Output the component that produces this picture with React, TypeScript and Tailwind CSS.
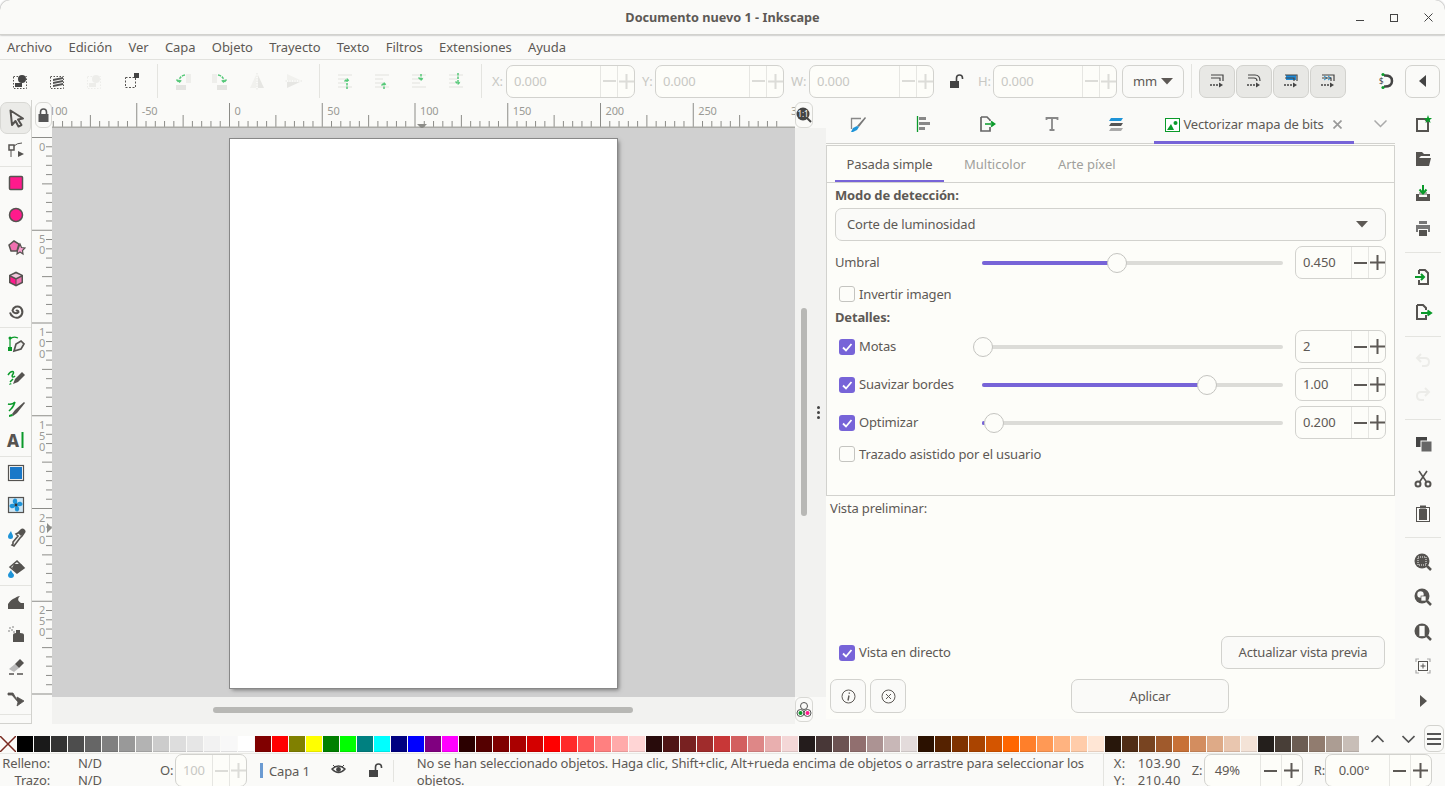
import React from 'react';

const G = '#555350';
const L = '#dcdcd8';
const GR = '#0a9a2a';
const P = '#ff1a8c';

const Svg = ({ size = 20, children }: { size?: number; children: React.ReactNode }) => (
  <svg width={size} height={size} viewBox="0 0 20 20" fill="none">{children}</svg>
);

const dotted = <rect x="2.5" y="5.5" width="13" height="12" stroke={G} strokeDasharray="1.5 1.5" />;

const toolIcons: Record<string, React.ReactNode> = {
  select: <path d="M4.5 2.5 L17 10.5 L12 11.5 L15.5 17 L12.5 18.5 L9.5 13 L6 17 Z" fill="#eeeeec" stroke={G} strokeWidth="2" strokeLinejoin="round" />,
  node: <><rect x="3" y="5" width="5" height="5" fill="#f5f5f3" stroke={G} strokeWidth="1.5" /><path d="M8 6 Q11 3 16 3 M5 10 V17" stroke={G} /><path d="M12 11 L18 14 L12 17 Z" fill={G} /></>,
  rect: <rect x="3.5" y="3.5" width="13" height="13" rx="1" fill={P} stroke={G} strokeWidth="1.5" />,
  circle: <circle cx="10" cy="10" r="6.5" fill={P} stroke={G} strokeWidth="1.5" />,
  star: <><path d="M3 8 L8 4 L13 7 L11 14 L5 14 Z" fill="#f070b0" stroke={G} strokeWidth="1.5" /><path d="M14 7 L15.5 10.5 L19 11 L16.5 13.5 L17 17 L14 15 L11 17 L11.5 13.5 Z" fill="#f8a0d0" stroke={G} strokeWidth="1.2" /></>,
  cube: <><path d="M10 2.5 L17 6 V14 L10 17.5 L3 14 V6 Z" fill={G} /><path d="M10 4.5 L15 6.5 L10 9 L5 6.5 Z" fill="#f0c8dc" /><path d="M4.5 8 L9.5 10.5 V15.5 L4.5 13 Z" fill={P} /><path d="M10.5 10.5 L15.5 8 V13 L10.5 15.5 Z" fill="#f070b0" /></>,
  spiral: <path d="M10 10 a1.5 1.5 0 0 1 2.5 1 a3.5 3.5 0 0 1 -6 -1.5 a5 5 0 0 1 8 -3 a6 6 0 0 1 -2 10 a7 7 0 0 1 -8.5 -5" stroke={G} strokeWidth="2" />,
  bezier: <><path d="M4 5 V15 M4 5 Q7 2 12 4" stroke={GR} strokeWidth="1.2" /><circle cx="4" cy="4" r="1.5" fill={GR} /><rect x="2" y="13" width="4" height="4" fill={GR} /><path d="M8 17 L10 10 L15 7 L18 10 L15 15 Z" fill="#f0f0ee" stroke={G} strokeWidth="1.7" /></>,
  pencil: <><path d="M2 9 C5 4 9 5 7 8 C5 11 7 12 9 10 M4 16 L7 13" stroke={GR} strokeWidth="1.5" /><path d="M7 18 L9 13 L16 6 L19 9 L12 16 Z" fill={G} /><path d="M4 17 l2 1 l-3 1 z" fill={GR} /></>,
  calli: <><path d="M2 6 C5 7 8 5 9 4 M9 4 C8 8 6 10 5 11 M3 13 L7 9" stroke={GR} strokeWidth="1.5" /><path d="M6 16 L9 12 L18 4 L19 5 L11 15 L7 18 Z" fill={G} /><path d="M3 17 L6 16 L7 18 L3 19 Z" fill={GR} /></>,
  text: <><text x="1" y="17" fontSize="17" fontWeight="800" fill={G} fontFamily="Noto Sans">A</text><rect x="15.5" y="2" width="2" height="16" fill={GR} /></>,
  gradient: <><rect x="2.5" y="2.5" width="15" height="15" fill="#fafaf8" stroke={G} strokeWidth="1.2" /><rect x="4" y="4" width="12" height="12" fill="#1a78c8" /></>,
  mesh: (
    <>
      <rect x="2.5" y="2.5" width="15" height="15" fill="#cfe6f3" stroke={G} strokeWidth="1.2" />
      {[0, 90, 180, 270].map(r => (
        <path key={r} d="M10 10 C6.5 9 5.5 5 8.5 3.5 C11.5 3 12 7 10 10Z" fill="#1e94d8" transform={`rotate(${r} 10 10)`} />
      ))}
      <circle cx="10" cy="10" r="1.4" fill="#333" />
    </>
  ),
  dropper: <><path d="M5 4 C3 7 2 8 2 9.5 a2.5 2.5 0 0 0 5 0 C7 8 6 7 5 4Z" fill="#1e94d8" /><path d="M7 17 L6 18 L8 19 L14 11 L16 9 L18 6 A2 2 0 0 0 15 3 L12 6 L10 7 L12 9 L7 15Z" fill="#f0f0ee" stroke={G} strokeWidth="1.6" /><path d="M12 6 L15 3 A2 2 0 0 1 18 6 L15 9Z" fill={G} /></>,
  bucket: <><path d="M5 11 C3 14 2 15 2 16 a3 3 0 0 0 6 0 C8 15 6 14 5 11Z" fill="#1e94d8" /><path d="M4 8 L11 2 L18 9 L11 14 Z" fill="#f0f0ee" stroke={G} strokeWidth="1.6" /><path d="M8 5 L15 5 L18 9 L11 14 L6 9Z" fill={G} /></>,
  tweak: <path d="M2 17 V12 C4 9 6 7 9 6 C12 4 14 4 14 4 C11 7 12 9 15 11 L18 11 V17Z" fill={G} />,
  spray: <><rect x="10" y="6" width="4" height="3" fill={G} /><path d="M7 11 Q7 9 10 9 H14 Q18 9 18 11 V18 H7Z" fill={G} /><circle cx="4" cy="4" r="1" fill="#aaa" /><circle cx="7" cy="3" r="1" fill="#aaa" /><circle cx="3" cy="7" r="1" fill="#aaa" /><circle cx="6" cy="6" r="1" fill="#aaa" /><circle cx="8" cy="8" r="1" fill="#aaa" /></>,
  eraser: <><path d="M3 13 L9 8 L13 12 L8 16 Z" fill="#bbb" /><path d="M9 8 L14 3 L18 7 L13 12 Z" fill={G} /><path d="M3 18 H8 M11 18 H17" stroke={G} strokeWidth="1.5" /></>,
  connector: <path d="M2 5 H7 L11 12 L11 9 L18 13 L11 18 L12 14 L6 7 H2Z" fill={G} stroke={G} strokeWidth=".8" />,
};

const raiseIcon = (top: boolean, up: boolean) => (
  <Svg>
    {[4, 8, 12, 16].map((y, i) => (
      <path key={y} d={`M3 ${y} H${i === 0 || i === 3 ? 17 : 11}`} stroke="#ebebe8" strokeWidth="1.6" />
    ))}
    <path d={up ? (top ? 'M12 18 V8 M9.5 10.5 L12 8 L14.5 10.5' : 'M12 18 V12 M9.5 14.5 L12 12 L14.5 14.5') : (top ? 'M12 2 V13 M9.5 10.5 L12 13 L14.5 10.5' : 'M12 3 V9 M9.5 6.5 L12 9 L14.5 6.5')} stroke="#55c878" strokeWidth="1.5" strokeDasharray="2.5 1" />
  </Svg>
);

const rotIcon = (flip: boolean) => (
  <Svg>
    <g transform={flip ? 'matrix(-1 0 0 1 20 0)' : undefined}>
      <rect x="13" y="3" width="5" height="9" fill="#eeeeeb" />
      <rect x="3" y="14" width="10" height="5" fill="#e4e4e1" />
      <path d="M12 4 Q6 5 6 11 M3.5 8.5 L6 11.5 L8.5 9" stroke="#55c878" strokeWidth="1.5" strokeDasharray="3 1" />
    </g>
  </Svg>
);

const flipIcon = (h: boolean) => (
  <Svg>
    <g transform={h ? undefined : 'rotate(90 10 10)'}>
      <path d="M9 4 L3 17 H9Z" fill="#f1f1ee" />
      <path d="M11 4 L17 17 H11Z" fill="#e6e6e3" />
      <path d="M10 2 V19" stroke="#e6e6e3" strokeDasharray="1.5 1" />
    </g>
  </Svg>
);

const topIcons: React.ReactNode[][] = [
  [
    <Svg key="a">{dotted}<circle cx="11" cy="8" r="4" fill="#444" /><rect x="4" y="12" width="7" height="4" fill="#444" /></Svg>,
    <Svg key="b">{dotted}<path d="M5 8 L15 6 V8 L5 10Z M5 11 L15 9 V11 L5 13Z M5 14 L15 12 V14 L5 16Z" fill="#555" /></Svg>,
    <Svg key="c"><rect x="2.5" y="5.5" width="13" height="12" stroke="#ededea" strokeDasharray="1.5 1.5" /><circle cx="11" cy="8" r="4" fill="#ededea" /><rect x="4" y="12" width="7" height="4" fill="#ededea" /></Svg>,
    <Svg key="d"><rect x="3.5" y="6.5" width="10" height="10" stroke={G} strokeDasharray="2 1.5" /><rect x="12" y="2" width="5" height="5" fill="#444" /></Svg>,
  ],
  [rotIcon(false), rotIcon(true), flipIcon(true), flipIcon(false)].map((n, i) => <React.Fragment key={i}>{n}</React.Fragment>),
  [raiseIcon(true, true), raiseIcon(false, true), raiseIcon(false, false), raiseIcon(true, false)].map((n, i) => <React.Fragment key={i}>{n}</React.Fragment>),
];

const sideIcons: Record<string, React.ReactNode> = {
  new: <><path d="M4 5 H12 L15 8 V17 H4 Z" fill="#fafaf8" stroke={G} strokeWidth="2" /><path d="M15 1 L16 4 L19 4 L16.8 6 L17.5 9 L15 7.3 L12.5 9 L13.2 6 L11 4 L14 4Z" fill={GR} /></>,
  open: <path d="M3 3 H9 L11 5 H17 V7 H8 L6 9 H18 L16 17 H3 Z" fill={G} />,
  save: <><path d="M3 11 H6 V14 H14 V11 H17 V18 H3Z" fill={G} /><path d="M6 9 H14 V12 H6Z" fill={G} opacity=".5" /><path d="M10 2 V9 M6.5 6.5 L10 10.5 L13.5 6.5" stroke={GR} strokeWidth="2" /></>,
  print: <><rect x="6" y="3" width="8" height="3" fill="#777" /><path d="M3 7 H17 V14 H15 V11 H5 V14 H3Z" fill="#777" /><rect x="6" y="12" width="8" height="6" fill={G} /></>,
  import: <><path d="M6 3 H12 L15 6 V17 H6 V13 M6 7 V3" stroke={G} strokeWidth="2" /><path d="M2 10 H10 M8 7 L11 10 L8 13" stroke={GR} strokeWidth="2" /></>,
  export: <><path d="M4 3 H10 L13 6 V8 M13 13 V17 H4 V3" stroke={G} strokeWidth="2" /><path d="M8 11 H17 M14.5 8.5 L18 11 L14.5 13.5" stroke={GR} strokeWidth="2" /></>,
  undo: <path d="M8 3 L4 7 L8 11 M4 7 H12 Q16 7 16 11 Q16 15 12 15 H9" stroke="#ecece9" strokeWidth="2" />,
  redo: <path d="M12 3 L16 7 L12 11 M16 7 H8 Q4 7 4 11 Q4 15 8 15 H11" stroke="#ecece9" strokeWidth="2" />,
  copy: <><rect x="3" y="3" width="11" height="10" fill="#444" /><rect x="8" y="7" width="11" height="11" fill="#666" stroke="#fafaf8" strokeWidth="1" /></>,
  cut: <><circle cx="5" cy="15" r="2.5" stroke={G} strokeWidth="2" /><circle cx="15" cy="15" r="2.5" stroke={G} strokeWidth="2" /><path d="M6.5 13 L14 2 M13.5 13 L6 2" stroke={G} strokeWidth="1.6" /></>,
  paste: <><rect x="3.5" y="4.5" width="13" height="14" stroke={G} /><rect x="6" y="6" width="8" height="11" fill={G} /><rect x="7" y="2.5" width="6" height="3" fill={G} /></>,
  zoomSel: <><circle cx="9" cy="9" r="7.5" fill={G} /><path d="M14 14 L18 18" stroke={G} strokeWidth="2.5" /><rect x="5" y="5" width="8" height="8" stroke="#fafaf8" strokeDasharray="1 1" /></>,
  zoomDraw: <><circle cx="9" cy="9" r="7.5" fill={G} /><path d="M14 14 L18 18" stroke={G} strokeWidth="2.5" /><circle cx="7.5" cy="7.5" r="3.2" fill="#fafaf8" /><rect x="8" y="9" width="5" height="5" fill="#fafaf8" stroke={G} strokeWidth=".7" /></>,
  zoomPage: <><circle cx="9" cy="9" r="7.5" fill={G} /><path d="M14 14 L18 18" stroke={G} strokeWidth="2.5" /><rect x="6" y="3.5" width="6" height="11" fill="#fafaf8" stroke={G} strokeWidth=".7" /></>,
  zoomCenter: <><path d="M3 6 V3 H6 M14 3 H17 V6 M3 14 V17 H6 M14 17 H17 V14" stroke="#aaa" strokeWidth="1.2" /><rect x="5.5" y="5.5" width="9" height="9" stroke={G} /><path d="M10 7.5 V12.5 M7.5 10 H12.5" stroke={G} /></>,
  more: <path d="M7 4 L14 10 L7 16Z" fill={G} />,
};

const sideGroups = [
  ['new', 'open', 'save', 'print'],
  ['import', 'export'],
  ['undo', 'redo'],
  ['copy', 'cut', 'paste'],
  ['zoomSel', 'zoomDraw', 'zoomPage', 'zoomCenter', 'more'],
];

const toolGroups = [
  ['select', 'node'],
  ['rect', 'circle', 'star', 'cube', 'spiral'],
  ['bezier', 'pencil', 'calli', 'text'],
  ['gradient', 'mesh', 'dropper', 'bucket'],
  ['tweak', 'spray', 'eraser', 'connector'],
];

const panelTabs: React.ReactNode[] = [
  <Svg key="fill"><path d="M3.5 15 V4.5 H13" stroke="#888" strokeWidth="1.3" /><path d="M9 12 L17 3 L18 4 L11 13Z" fill="#777" /><path d="M3 18 L5 14 L9 12 L11 13 L9 16 L5 18Z" fill="#1e94d8" /></Svg>,
  <Svg key="align"><path d="M4.5 2 V18" stroke={GR} strokeWidth="1.3" /><rect x="6" y="3" width="7" height="3" fill="#888" /><rect x="6" y="8" width="11" height="3" fill="#888" /><rect x="6" y="13" width="6" height="3" fill="#888" /></Svg>,
  <Svg key="xml"><path d="M4 3 H10 L13 6 V7 M13 13 V17 H4 V3" stroke="#666" strokeWidth="1.7" /><path d="M8 10 H17 M14 7.5 L17.5 10 L14 12.5" stroke={GR} strokeWidth="1.7" /></Svg>,
  <Svg key="text"><path d="M4.5 6 V4 H15.5 V6 M10 4 V16 M7.5 16 H12.5" stroke="#888" strokeWidth="1.8" /></Svg>,
  <Svg key="layers"><path d="M5 4 H17 L15 7 H3Z" fill="#1e94d8" /><path d="M5 9 H17 L15 12 H3Z" fill="#555" /><path d="M5 14 H17 L15 17 H3Z" fill="#aaa" /></Svg>,
];

const palette = [
  '#000000', '#1a1a1a', '#333333', '#4d4d4d', '#666666', '#808080', '#999999', '#b3b3b3', '#cccccc', '#dddddd', '#e6e6e6', '#f2f2f2', '#f8f8f8', '#ffffff',
  '#800000', '#ff0000', '#808000', '#ffff00', '#008000', '#00ff00', '#008080', '#00ffff', '#000080', '#0000ff', '#800080', '#ff00ff',
  '#2b0000', '#550000', '#800000', '#aa0000', '#d40000', '#ff0000', '#ff2a2a', '#ff5555', '#ff8080', '#ffaaaa', '#ffd5d5',
  '#280b0b', '#501616', '#782121', '#a02c2c', '#c83737', '#d35f5f', '#de8787', '#e9afaf', '#f4d7d7',
  '#241c1c', '#483737', '#6c5353', '#916f6f', '#ac9393', '#c8b7b7', '#e3dbdb',
  '#2b1100', '#552200', '#803300', '#aa4400', '#d45500', '#ff6600', '#ff7f2a', '#ff9955', '#ffb380', '#ffccaa', '#ffe6d5',
  '#28170b', '#502d16', '#784421', '#a05a2c', '#c87137', '#d38d5f', '#deaa87', '#e9c6af', '#f4e3d7',
  '#241f1c', '#483e37', '#6c5d53', '#917c6f', '#ac9d93', '#c8beb7',
];

const Minus = ({ color }: { color: string }) => <div className="h-[2px] w-[13px]" style={{ background: color }} />;

const PlusMinus = ({ color, cell }: { color: string; cell: string }) => (
  <>
    <div className={`flex h-full shrink-0 items-center justify-center border-l border-[#e6e6e2] ${cell}`}><Minus color={color} /></div>
    <div className={`flex h-full shrink-0 items-center justify-center border-l border-[#e6e6e2] ${cell}`}>
      <svg width="15" height="15" viewBox="0 0 15 15"><path d="M0 7.5 H15 M7.5 0 V15" stroke={color} strokeWidth="2" /></svg>
    </div>
  </>
);

const SpinField = ({ value, dim, className, cell, pad = 'pl-[7px]' }: { value: string; dim?: boolean; className: string; cell: string; pad?: string }) => (
  <div className={`flex h-[33px] shrink-0 items-center rounded-[7px] border border-[#d2d2ce] bg-[#fdfdf9] ${className}`}>
    <div className={`flex-1 ${pad} ${dim ? 'text-[#c8c8c4]' : 'text-[#5d5955]'}`}>{value}</div>
    <PlusMinus color={dim ? L : '#5d5955'} cell={cell} />
  </div>
);

const Checkbox = ({ checked }: { checked?: boolean }) =>
  checked ? (
    <div className="ml-[4px] flex h-[16px] w-[16px] shrink-0 items-center justify-center rounded-[3px] bg-[#7764d8]">
      <svg width="12" height="12" viewBox="0 0 12 12"><path d="M2 6.5 L5 9.5 L10.5 3" stroke="#fff" strokeWidth="1.8" fill="none" /></svg>
    </div>
  ) : (
    <div className="ml-[4px] h-[16px] w-[16px] shrink-0 rounded-[3px] border border-[#c4c4c0] bg-[#fdfdf9]" />
  );

const Slider = ({ fill, thumb }: { fill: number; thumb: number }) => (
  <div className="relative h-[4px] w-[301px] shrink-0 rounded-full bg-[#dcdcd8]">
    <div className="h-full rounded-full bg-[#7764d8]" style={{ width: fill }} />
    <div className="absolute top-[-8px] h-[20px] w-[20px] rounded-full border border-[#c4c4c0] bg-[#fdfdf9]" style={{ left: thumb - 10 }} />
  </div>
);

const SliderRow = ({ label, checked, value, fill, thumb }: { label: string; checked?: boolean; value: string; fill: number; thumb: number }) => (
  <div className="mt-[5px] flex h-[33px] items-center">
    <div className="flex w-[147px] shrink-0 items-center gap-[4px]">
      {checked && <Checkbox checked />}
      <span>{label}</span>
    </div>
    <Slider fill={fill} thumb={thumb} />
    <SpinField value={value} className="ml-[12px] w-[91px]" cell="w-[17px]" />
  </div>
);

const major = [-2, -1, 0, 1, 2, 3, 4, 5, 6];

const HRuler = () => (
  <svg width="743" height="26" className="block shrink-0">
    {Array.from({ length: 90 }, (_, i) => {
      const x = 177.5 + (i - 30) * 9.275;
      const h = i % 10 === 0 ? 25 : i % 5 === 0 ? 13 : 7;
      return <path key={i} d={`M${x} 26 V${26 - h}`} stroke="#8c8c88" />;
    })}
    <path d="M0 25.5 H743" stroke="#aaaaa6" strokeWidth="2" />
    {major.map(k => (
      <text key={k} x={177.5 + k * 92.75 + 5} y="13" fontSize="11" fill="#9a9a96" fontFamily="Noto Sans">{k < -1 ? '100' : k * 50}</text>
    ))}
    <path d="M365 22 H375 L370 27Z" fill="#8c8c88" />
  </svg>
);

const VRuler = () => (
  <svg width="20" height="569" className="block shrink-0">
    {Array.from({ length: 62 }, (_, i) => {
      const y = 9.5 + i * 9.275;
      const w = i % 10 === 0 ? 20 : i % 5 === 0 ? 10 : 6;
      return <path key={i} d={`M20 ${y} H${20 - w}`} stroke="#8c8c88" />;
    })}
    {[0, 1, 2, 3, 4, 5].map(k =>
      String(k * 50).split('').map((d, j) => (
        <text key={`${k}${j}`} x="10" y={9.5 + k * 92.75 + 13 + j * 11} fontSize="11" fill="#9a9a96" textAnchor="middle" fontFamily="Noto Sans">{d}</text>
      )),
    )}
    <path d="M15 395 V405 L20 400Z" fill="#8c8c88" />
  </svg>
);

export default function App() {
  return (
    <div className="flex h-[786px] w-[1445px] flex-col overflow-hidden bg-white text-[13px] leading-[17px] tracking-[-0.15px] text-[#5d5955]" style={{ fontFamily: '"Noto Sans", sans-serif' }}>
      {/* title bar */}
      <div className="relative flex h-[35px] shrink-0 items-center justify-center rounded-t-[10px] border-b border-[#d2d2ce] bg-[#fafaf8] shadow-[0_0_2px_#777]">
        <span className="text-[12.7px] font-bold tracking-normal text-[#5d5955]">Documento nuevo 1 - Inkscape</span>
        <div className="absolute right-[0px] top-0 flex h-[35px] items-center">
          <div className="flex w-[34px] justify-center pt-[6px]"><div className="h-[1px] w-[8px] bg-[#444]" /></div>
          <div className="flex w-[34px] justify-center"><div className="h-[8px] w-[8px] border border-[#444]" /></div>
          <div className="flex w-[34px] justify-center">
            <svg width="9" height="9" viewBox="0 0 9 9"><path d="M.5 .5 L8.5 8.5 M8.5 .5 L.5 8.5" stroke="#444" /></svg>
          </div>
        </div>
      </div>

      {/* menu bar */}
      <div className="flex h-[25px] shrink-0 items-center gap-[16.3px] border-b border-[#e2e2de] bg-[#fafaf8] pl-[7px] tracking-[-0.05px]">
        {['Archivo', 'Edición', 'Ver', 'Capa', 'Objeto', 'Trayecto', 'Texto', 'Filtros', 'Extensiones', 'Ayuda'].map(m => (
          <span key={m}>{m}</span>
        ))}
      </div>

      {/* command bar */}
      <div className="flex h-[40px] shrink-0 items-center bg-[#fafaf8] pl-[2.5px] pt-[2px]">
        {topIcons.map((group, i) => (
          <React.Fragment key={i}>
            {group.map((ic, j) => (
              <div key={j} className="flex w-[37px] shrink-0 justify-center">{ic}</div>
            ))}
            <div className="mx-[6.5px] h-[34px] w-px shrink-0 bg-[#e4e4e0]" />
          </React.Fragment>
        ))}
        <div className="ml-[3.5px] w-[14px] shrink-0 text-[#c8c8c4]">X:</div>
        <SpinField value="0.000" dim className="w-[129px]" cell="w-[17px]" />
        <div className="ml-[7px] w-[13px] shrink-0 text-[#c8c8c4]">Y:</div>
        <SpinField value="0.000" dim className="w-[129px]" cell="w-[17px]" />
        <div className="ml-[7px] w-[18px] shrink-0 text-[#c8c8c4]">W:</div>
        <SpinField value="0.000" dim className="w-[125px]" cell="w-[17px]" />
        <div className="flex w-[44px] shrink-0 justify-center">
          <svg width="15" height="15" viewBox="0 0 15 15"><rect x="1" y="7" width="9" height="7" fill="#444" /><path d="M7.5 7 V4 a3 3 0 0 1 6 0 V5" stroke="#444" strokeWidth="1.6" fill="none" /></svg>
        </div>
        <div className="w-[15px] shrink-0 text-[#c8c8c4]">H:</div>
        <SpinField value="0.000" dim className="w-[124px]" cell="w-[17px]" />
        <div className="ml-[5px] flex h-[33px] w-[62px] shrink-0 items-center justify-center gap-[4px] rounded-[7px] border border-[#d2d2ce] bg-[#fafaf8]">
          <span>mm</span>
          <svg width="12" height="7" viewBox="0 0 12 7"><path d="M0 0 H12 L6 6.5Z" fill="#5d5955" /></svg>
        </div>
        <div className="mx-[7px] h-[34px] w-px shrink-0 bg-[#e4e4e0]" />
        <div className="flex gap-px">
          {[0, 1, 2, 3].map(i => (
            <div key={i} className="flex h-[33px] w-[36px] items-center justify-center rounded-[7px] border border-[#d2d2ce] bg-[#e8e8e5]">
              <svg width="16" height="16" viewBox="0 0 16 16">
                {i === 2 && <rect x="3" y="2" width="10" height="5" fill="#1e8ad8" />}
                {i === 3 && <path d="M4 3 l3 2 l-3 2 M8 3 l3 2 l-3 2" stroke="#1e94d8" fill="none" />}
                {i === 1 ? <path d="M2 2 H9 Q14 2 14 8 M2 5 H8 Q11 5 11 8" stroke="#444" strokeWidth="1.2" fill="none" /> : <path d="M2 2 H14 V8 M2 5 H11 V8" stroke="#444" strokeWidth="1.2" fill="none" />}
                <path d="M1 12 H10" stroke="#444" strokeWidth="1.5" strokeDasharray="2 1" />
                <path d="M10 9.5 L14 12 L10 14.5Z" fill="#444" />
              </svg>
            </div>
          ))}
        </div>
        <div className="ml-[30px] w-[20px] shrink-0">
          <svg width="20" height="20" viewBox="0 0 20 20">
            <path d="M8 4.5 Q16 4 16 10 Q16 16 8 15.5" stroke="#444" strokeWidth="2.5" fill="none" />
            <circle cx="7" cy="3.5" r="1.6" fill={GR} /><circle cx="7" cy="16.5" r="1.6" fill={GR} />
            <text x="3" y="13" fontSize="8" fill="#444" fontFamily="Noto Sans">$</text>
          </svg>
        </div>
        <div className="ml-[9px] flex h-[33px] w-[35px] shrink-0 items-center justify-center rounded-[7px] border border-[#d2d2ce]">
          <svg width="8" height="12" viewBox="0 0 8 12"><path d="M7 0 V12 L0 6Z" fill="#444" /></svg>
        </div>
      </div>

      {/* main area */}
      <div className="flex h-[625px] shrink-0 bg-[#fafaf8]">
        <div className="h-[624px] w-[32px] shrink-0 border-r border-b border-[#d2d2ce] pt-[2px]">
          {toolGroups.map((group, i) => (
            <div key={i} className="border-b border-[#e4e4e0]">
              {group.map(id => (
                <div key={id} className={`flex h-[32px] items-center justify-center ${id === 'select' ? 'rounded-[7px] border border-[#d8d8d4] bg-[#ebebe8]' : ''}`}>
                  <Svg>{toolIcons[id]}</Svg>
                </div>
              ))}
            </div>
          ))}
        </div>

        <div className="flex w-[794px] shrink-0 flex-col">
          <div className="mt-[2px] flex h-[26px] shrink-0">
            <div className="ml-[3px] flex h-[26px] w-[17px] shrink-0 items-center justify-center rounded-[6px] border border-[#d8d8d4]">
              <svg width="11" height="14" viewBox="0 0 11 14"><rect x="0.5" y="6" width="10" height="8" fill="#555" /><path d="M2.5 6 V4 a3 3 0 0 1 6 0 V6" stroke="#555" strokeWidth="1.6" fill="none" /></svg>
            </div>
            <HRuler />
            <div className="flex h-[26px] w-[18px] shrink-0 items-center justify-center rounded-[6px] border border-[#d8d8d4]">
              <svg width="16" height="16" viewBox="0 0 16 16">
                <path d="M11 11 L15 15" stroke="#444" strokeWidth="2" />
                <circle cx="7" cy="7" r="6.5" fill="#444" />
                <text x="7" y="10" fontSize="8" fill="#fff" textAnchor="middle" fontFamily="Noto Sans">1:1</text>
              </svg>
            </div>
          </div>
          <div className="flex h-[569px] shrink-0">
            <VRuler />
            <div className="h-full w-[743px] shrink-0 bg-[#d0d0d0] pl-[178px] pt-[11px]">
              <div className="h-[549px] w-[387px] bg-white shadow-[2px_2px_4px_#777] outline outline-[#888]" />
            </div>
            <div className="flex h-full w-[31px] shrink-0 bg-[#f2f2f0] pl-[6px] pt-[180px]">
              <div className="h-[208px] w-[6px] rounded-full bg-[#b8b8b5]" />
              <div className="ml-[10px] mt-[98px] flex flex-col gap-[2px]">
                {[0, 1, 2].map(i => <div key={i} className="h-[3px] w-[3px] rounded-full bg-[#444]" />)}
              </div>
            </div>
          </div>
          <div className="flex h-[28px] shrink-0">
            <div className="w-[20px] shrink-0" />
            <div className="h-[27px] w-[743px] shrink-0 bg-[#f2f2f0] pl-[161px] pt-[10px]">
              <div className="h-[6px] w-[420px] rounded-full bg-[#b8b8b5]" />
            </div>
            <div className="flex h-[25px] w-[18px] shrink-0 items-center justify-center rounded-[6px] border border-[#d8d8d4] bg-[#fafaf8]">
              <svg width="16" height="18" viewBox="0 0 16 18">
                <circle cx="8" cy="5" r="3.5" stroke="#555" fill="none" />
                <circle cx="4.5" cy="12" r="3.5" stroke="#555" fill="none" /><circle cx="4.5" cy="12" r="2" fill={GR} />
                <circle cx="11.5" cy="12" r="3.5" stroke="#555" fill="none" /><circle cx="11.5" cy="12" r="2" fill={P} />
              </svg>
            </div>
          </div>
        </div>

        {/* dock panel */}
        <div className="flex h-[619px] w-[569px] shrink-0 flex-col">
          <div className="mt-[2px] flex h-[42px] shrink-0 items-center border-b border-[#d2d2ce] bg-[#fafaf8]">
            {panelTabs.map((ic, i) => (
              <div key={i} className="flex w-[64.5px] shrink-0 justify-center pt-[3px]">{ic}</div>
            ))}
            <div className="ml-[5px] flex h-[42px] w-[200px] shrink-0 items-center justify-center gap-[3px] border-b-[3px] border-[#7764d8] pt-[7px]">
              <svg width="15" height="14" viewBox="0 0 15 14">
                <rect x=".5" y=".5" width="14" height="13" fill="#fff" stroke={GR} />
                <path d="M2 12 L6 6 L9 12Z" fill={GR} /><circle cx="10.5" cy="5" r="2" fill={GR} />
              </svg>
              <span>Vectorizar mapa de bits</span>
              <svg width="9" height="9" viewBox="0 0 9 9" className="ml-[6px]"><path d="M.5 .5 L8.5 8.5 M8.5 .5 L.5 8.5" stroke="#999" strokeWidth="1.7" /></svg>
            </div>
            <div className="ml-[20px] pt-[3px]">
              <svg width="13" height="8" viewBox="0 0 13 8"><path d="M.5 .5 L6.5 6.5 L12.5 .5" stroke="#aaa" strokeWidth="1.5" fill="none" /></svg>
            </div>
          </div>

          <div className="flex flex-1 flex-col bg-[#fdfdf9]">
            <div className="mt-[1px] h-[351px] shrink-0 border border-[#d2d2ce] px-[8px]">
              <div className="-mx-[8px] flex h-[37px] border-b border-[#d2d2ce] px-[8px]">
                <div className="flex w-[109px] items-center justify-center border-b-[2px] border-[#7764d8] pt-[2px]">Pasada simple</div>
                <div className="ml-[20px] flex items-center tracking-normal text-[#a0a09c]">Multicolor</div>
                <div className="ml-[32px] flex items-center tracking-normal text-[#a0a09c]">Arte píxel</div>
              </div>
              <div className="mt-[4px] font-bold">Modo de detección:</div>
              <div className="mt-[4px] flex h-[33px] items-center justify-between rounded-[7px] border border-[#d2d2ce] bg-[#fafaf8] pl-[11px] pr-[17px]">
                <span>Corte de luminosidad</span>
                <svg width="12" height="7" viewBox="0 0 12 7"><path d="M0 0 H12 L6 6.5Z" fill="#5d5955" /></svg>
              </div>
              <SliderRow label="Umbral" value="0.450" fill={135} thumb={135} />
              <div className="mt-[7px] flex h-[16px] items-center gap-[4px]"><Checkbox /><span>Invertir imagen</span></div>
              <div className="mt-[7px] font-bold">Detalles:</div>
              <div className="-mt-[1px]">
                <SliderRow label="Motas" checked value="2" fill={0} thumb={1} />
                <SliderRow label="Suavizar bordes" checked value="1.00" fill={225} thumb={225} />
                <SliderRow label="Optimizar" checked value="0.200" fill={3} thumb={12} />
              </div>
              <div className="mt-[7px] flex h-[16px] items-center gap-[4px]"><Checkbox /><span>Trazado asistido por el usuario</span></div>
            </div>
            <div className="mt-[4px] pl-[4px]">Vista preliminar:</div>
            <div className="flex-1" />
            <div className="flex h-[33px] items-center justify-between pr-[10px]">
              <div className="ml-[9px] flex items-center gap-[4px]"><Checkbox checked /><span>Vista en directo</span></div>
              <div className="flex h-[33px] w-[164px] items-center justify-center rounded-[7px] border border-[#d2d2ce] bg-[#fafaf8]">Actualizar vista previa</div>
            </div>
            <div className="mb-[6px] mt-[10px] flex h-[34px] items-center pl-[4px]">
              <div className="flex h-[34px] w-[36px] items-center justify-center rounded-[7px] border border-[#d2d2ce] bg-[#fafaf8]">
                <svg width="15" height="15" viewBox="0 0 15 15"><circle cx="7.5" cy="7.5" r="6.5" stroke="#5d5955" fill="none" /><path d="M8 6.5 L7 11.5 M8.3 3.5 V4.8" stroke="#5d5955" strokeWidth="1.4" /></svg>
              </div>
              <div className="ml-[4px] flex h-[34px] w-[36px] items-center justify-center rounded-[7px] border border-[#d2d2ce] bg-[#fafaf8]">
                <svg width="15" height="15" viewBox="0 0 15 15"><circle cx="7.5" cy="7.5" r="6.5" stroke="#5d5955" fill="none" /><path d="M5 5 L10 10 M10 5 L5 10" stroke="#5d5955" /></svg>
              </div>
              <div className="ml-[165px] flex h-[34px] w-[158px] items-center justify-center rounded-[7px] border border-[#d2d2ce] bg-[#fafaf8]">Aplicar</div>
            </div>
          </div>
        </div>

        {/* right command bar */}
        <div className="flex w-[50px] shrink-0 flex-col items-center pl-[6px] pt-[7px]">
          {sideGroups.map((group, i) => (
            <React.Fragment key={i}>
              {i > 0 && <div className="my-[6.7px] h-px w-[36px] bg-[#e4e4e0]" />}
              {group.map(id => (
                <div key={id} className="flex h-[34.6px] w-full items-center justify-center">
                  <Svg>{sideIcons[id]}</Svg>
                </div>
              ))}
            </React.Fragment>
          ))}
        </div>
      </div>

      {/* palette */}
      <div className="flex h-[28px] shrink-0 bg-[#fafaf8]">
        <div className="mt-[11px] flex h-[16px] items-start gap-px">
          <svg width="16" height="16" viewBox="0 0 16 16" className="shrink-0"><path d="M0 0 L16 16 M16 0 L0 16" stroke="#7a2a20" strokeWidth="1.5" /></svg>
          {palette.map((c, i) => <div key={i} className="h-[16px] w-[16px] shrink-0 border-b border-black/10" style={{ background: c }} />)}
        </div>
        <div className="ml-[3px] mt-[10px] flex w-[31px] justify-center">
          <svg width="13" height="8" viewBox="0 0 13 8"><path d="M.5 7 L6.5 1 L12.5 7" stroke="#555" strokeWidth="1.7" fill="none" /></svg>
        </div>
        <div className="mt-[10px] flex w-[31px] justify-center">
          <svg width="13" height="8" viewBox="0 0 13 8"><path d="M.5 1 L6.5 7 L12.5 1" stroke="#555" strokeWidth="1.7" fill="none" /></svg>
        </div>
        <div className="flex h-[27px] w-[20px] shrink-0 flex-col items-center justify-center gap-[3px] rounded-[6px] border border-[#d2d2ce]">
          {[0, 1, 2].map(i => <div key={i} className="h-[2px] w-[14px] bg-[#555]" />)}
        </div>
      </div>

      {/* status bar */}
      <div className="flex h-[33px] shrink-0 overflow-hidden border-t border-[#e8e8e4] bg-[#fafaf8] leading-[17px]">
        <div className="w-[52px] shrink-0 pl-[1px] pt-[1px] text-right">
          <div className="pr-[2px]">Relleno:</div>
          <div className="pr-[2px]">Trazo:</div>
        </div>
        <div className="ml-[26px] w-[82px] shrink-0 pt-[1px]"><div>N/D</div><div>N/D</div></div>
        <div className="flex h-[33px] items-center">
          <span className="w-[15px]">O:</span>
          <SpinField value="100" dim className="w-[72px]" cell="w-[17px]" />
          <div className="ml-[13px] h-[15px] w-[3px] bg-[#6b9bd2]" />
          <span className="ml-[6px] pt-[1px]">Capa 1</span>
          <div className="ml-[21px] w-[15px]">
            <svg width="15" height="13" viewBox="0 0 15 13"><path d="M1 5 Q7.5 -1 14 5 Q7.5 12 1 5Z" stroke="#444" strokeWidth="1.5" fill="none" /><circle cx="7.5" cy="5.5" r="2.4" fill="#444" /><path d="M2 1 L4 3 M13 1 L11 3" stroke="#444" /></svg>
          </div>
          <div className="ml-[22px] w-[15px]">
            <svg width="15" height="15" viewBox="0 0 15 15"><rect x="1" y="7" width="9" height="7" fill="#444" /><path d="M7.5 7 V4 a3 3 0 0 1 6 0 V5" stroke="#444" strokeWidth="1.6" fill="none" /></svg>
          </div>
          <div className="ml-[10px] h-[22px] w-px bg-[#e4e4e0]" />
        </div>
        <div className="ml-[23px] w-[680px] shrink-0 pt-[1px]">No se han seleccionado objetos. Haga clic, Shift+clic, Alt+rueda encima de objetos o arrastre para seleccionar los objetos.</div>
        <div className="ml-[6px] h-full w-px bg-[#e4e4e0]" />
        <div className="ml-[10px] w-[67px] shrink-0 pt-[1px] tracking-[0.4px]">
          <div className="flex justify-between"><span>X:</span><span className="w-[43px] text-right">103.90</span></div>
          <div className="flex justify-between"><span>Y:</span><span className="w-[43px] text-right">210.40</span></div>
        </div>
        <div className="ml-[11px] flex h-[33px] items-center">
          <span className="w-[12px]">Z:</span>
          <SpinField value="49%" className="w-[99px]" cell="w-[21px]" pad="pl-[10px]" />
          <span className="ml-[11px] w-[11px]">R:</span>
          <SpinField value="0.00°" className="w-[107px]" cell="w-[21px]" pad="pl-[13px]" />
        </div>
      </div>
    </div>
  );
}
